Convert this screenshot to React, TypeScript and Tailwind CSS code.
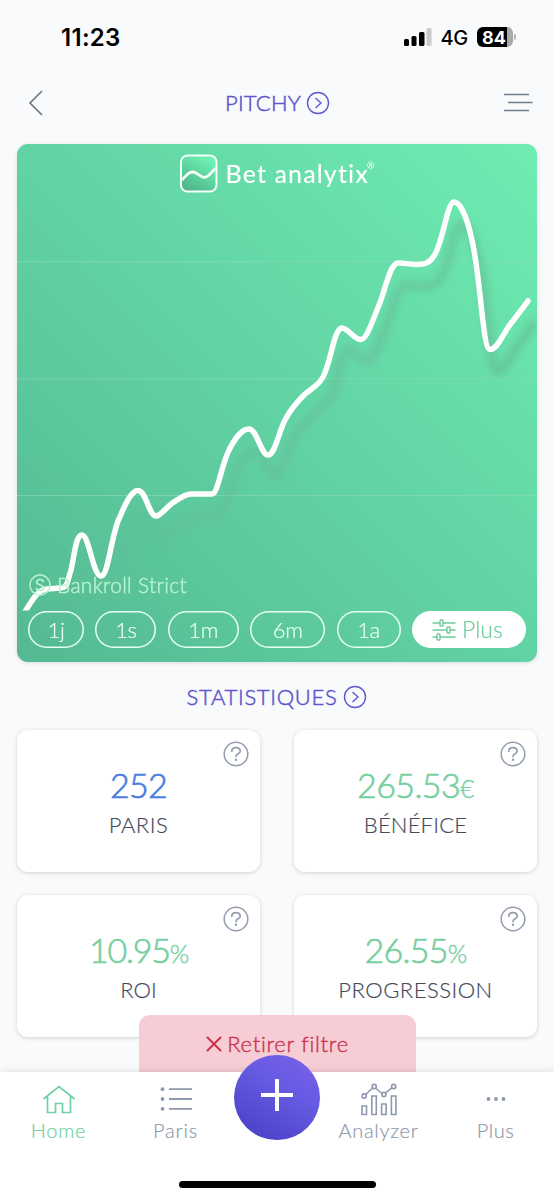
const ranges = [
  { label: "1j", size: "w-[56px]" },
  { label: "1s", size: "w-[61px]" },
  { label: "1m", size: "w-[71px]" },
  { label: "6m", size: "w-[75px]" },
  { label: "1a", size: "w-[64px]" }
]

const stats = [
  { id: 1, value: "252", unit: "", label: "PARIS", color: "text-[#4a7ee0]", tracking: "tracking-[-0.7px]", labelTracking: "tracking-[0.5px]" },
  { id: 2, value: "265.53", unit: "€", label: "BÉNÉFICE", color: "text-[#79cf9f]", tracking: "tracking-[-0.6px]", labelTracking: "tracking-[0.2px]" },
  { id: 3, value: "10.95", unit: "%", label: "ROI", color: "text-[#79cf9f]", tracking: "tracking-[-1.2px]", labelTracking: "tracking-[0.1px]" },
  { id: 4, value: "26.55", unit: "%", label: "PROGRESSION", color: "text-[#79cf9f]", tracking: "tracking-[-0.7px]", labelTracking: "tracking-[0.5px]" }
]

const curve =
  "M24 613 C32 601 38 589 47 589 L60 588 C68 588 67 582 71 570 C75 552 76 535 82 535 C89 535 93 576 101 576 C108 576 110 543 118 521 C123 510 130 490.500 138 490.500 C146 490.500 149 516 156 516 C161 516 168 505 174 502 C180 498 185 494 191 494 L212 494 C218 494 221 465 230 448 C235 439 241 429 249 429 C257 429 261 455 268 455 C275 455 279 431 285 420 C291 408 298 401 305 394 C312 388 318 386 323 377 C331 362 334 328 342 328 C348 328 354 339.500 361 339.500 C367 339.500 373 319 379 305 C385 291 390 263 398 263 C406 263 411 264.500 416 264.500 C423 264.500 429 264 434 256 C443 243 447 202 454 202 C461 202 468 220 473 245 C481 285 483 349.500 490 349.500 C497 349.500 501 338 509 326 L528 301"

const StatusBar = () => (
  <div className="flex h-[74px] items-center justify-between pl-[61px] pr-[38px] font-[Inter,sans-serif] text-black">
    <span className="mt-[2px] text-[24px] font-semibold tracking-[0.3px]">11:23</span>
    <div className="flex items-center">
      <svg width="28" height="18" viewBox="0 0 28 18">
        <rect x="0" y="11" width="5" height="7" rx="1.500" />
        <rect x="7.500" y="8" width="5" height="10" rx="1.500" />
        <rect x="15" y="4" width="5.500" height="14" rx="1.500" />
        <rect x="22.500" y="0" width="5" height="18" rx="1.500" fill="#c9cacc" />
      </svg>
      <span className="ml-[9px] mt-[2px] text-[20px] font-medium tracking-[-0.3px]">4G</span>
      <div className="ml-[9px] flex h-[20px] w-[36px] items-center justify-center rounded-[6px] bg-[linear-gradient(90deg,#000_84%,#a8a9ab_84%)] pr-[2px] text-[18px] font-bold text-white">
        84
      </div>
      <div className="ml-[1px] h-[6px] w-[2px] rounded-r-full bg-[#b3b4b6]" />
    </div>
  </div>
)

const CircleArrow = () => (
  <svg width="24" height="24" viewBox="0 0 24 24" fill="none" stroke="#6258d0" strokeWidth="1.400">
    <circle cx="12" cy="12" r="10.500" />
    <path d="M9.500 7 L15 12 L9.500 17" />
  </svg>
)

const HelpIcon = () => (
  <svg width="26" height="26" viewBox="0 0 26 26" fill="none" stroke="#949db0" strokeWidth="1.500" strokeLinecap="round">
    <circle cx="13" cy="13" r="11.800" />
    <path d="M8.800 10.200 C8.800 5.300 17.200 5.300 17.200 10.200 C17.200 13 13 12.600 13 15.500" strokeWidth="1.700" />
    <circle cx="13" cy="18.700" r="1.200" fill="#949db0" stroke="none" />
  </svg>
)

const Logo = () => (
  <div className="flex items-start justify-center pt-[10px] text-white">
    <svg width="38" height="39" viewBox="0 0 38 39" fill="none" stroke="#f4fff9">
      <defs>
        <linearGradient id="logo" x1="0" y1="1" x2="0.600" y2="0">
          <stop offset="0" stopColor="#49ad83" />
          <stop offset="1" stopColor="#6df0b3" />
        </linearGradient>
      </defs>
      <rect x="1" y="1.500" width="35.500" height="36" rx="6.500" strokeWidth="2" fill="url(#logo)" />
      <path d="M2 26 C7 20 11 16 16 19 C21 22 24 26 29 21 L36 14" strokeWidth="2.800" />
    </svg>
    <span className="ml-[8px] mt-[2px] text-[25px] font-medium leading-[34px] tracking-[1.1px]">Bet analytix</span>
    <span className="-ml-[2px] mt-[5px] text-[9px] leading-[14px]">®</span>
  </div>
)

const Chart = () => (
  <section className="relative mx-[17px] flex h-[518px] flex-col justify-between overflow-hidden rounded-[11px] bg-[linear-gradient(45deg,#55b992_0%,#61d2a3_48%,#6eedb2_100%)]">
    <svg className="absolute inset-0" width="520" height="518" viewBox="17 144 520 518" fill="none">
      <defs>
        <filter id="soft" x="-10%" y="-10%" width="120%" height="130%">
          <feGaussianBlur stdDeviation="4.500" />
        </filter>
        <linearGradient id="shade" x1="17" y1="0" x2="537" y2="0" gradientUnits="userSpaceOnUse">
          <stop offset="0" stopColor="#6cad94" stopOpacity="0" />
          <stop offset="0.450" stopColor="#6cad94" stopOpacity="0.450" />
          <stop offset="1" stopColor="#63a785" stopOpacity="0.650" />
        </linearGradient>
        <clipPath id="plot">
          <rect x="17" y="144" width="520" height="466.500" />
        </clipPath>
      </defs>
      <path d="M17 261.500 H537 M17 378.900 H537 M17 495.500 H537" stroke="#8fd9b9" strokeOpacity="0.600" />
      <g clipPath="url(#plot)" strokeLinecap="round" strokeLinejoin="round">
        <path d={curve} transform="translate(7 22)" stroke="url(#shade)" strokeWidth="6.500" filter="url(#soft)" />
        <path d={curve} stroke="#fff" strokeWidth="5.500" />
      </g>
    </svg>
    <div className="relative">
      <Logo />
    </div>
    <div className="relative pb-[14px]">
      <div className="flex items-center gap-[6px] pl-[12px] text-[#b9f4ce]">
        <svg width="22" height="22" viewBox="0 0 22 22" fill="none" stroke="currentColor" strokeWidth="1.400">
          <circle cx="11" cy="11" r="10" />
          <path d="M14.500 8 C14 4.500 7.500 4.800 7.700 8.200 C8 11.800 14.600 10.200 14.500 14 C14.300 17.300 7.600 17.400 7.300 13.800" strokeWidth="1.700" />
        </svg>
        <span className="text-[21px] font-light leading-[24px] tracking-[0.3px] [-webkit-text-stroke:0.4px_currentColor]">Bankroll Strict</span>
      </div>
      <div className="mt-[14px] flex justify-between pl-[11px] pr-[11px]">
        {ranges.map((range) => (
          <button
            key={range.label}
            className={`${range.size} h-[37px] rounded-full text-[22px] font-light leading-[37px] tracking-[-0.3px] text-[#eafff4] shadow-[inset_0_0_0_1.5px_#e8fff3] [-webkit-text-stroke:0.2px_currentColor]`}
          >
            {range.label}
          </button>
        ))}
        <button className="flex h-[37px] w-[114px] items-center justify-center gap-[6px] rounded-full bg-white pr-[3px] text-[23px] font-light text-[#6fcb9b] [-webkit-text-stroke:0.2px_currentColor]">
          <svg width="24" height="22" viewBox="0 0 24 22" fill="none" stroke="currentColor" strokeWidth="1.400">
            <path d="M0.500 4 H8 M11 4 H23.500 M0.500 11 H15 M18 11 H23.500 M0.500 18 H5 M8 18 H23.500" />
            <rect x="8" y="1" width="3" height="6" rx="0.800" />
            <rect x="15" y="8" width="3" height="6" rx="0.800" />
            <rect x="5" y="15" width="3" height="6" rx="0.800" />
          </svg>
          Plus
        </button>
      </div>
    </div>
  </section>
)

const BottomNav = () => (
  <nav className="absolute inset-x-0 bottom-0 h-[128px] bg-white shadow-[0_0_8px_rgba(0,0,0,0.12)]">
    <div className="grid grid-cols-[117px_117px_86px_117px_117px] pt-[10px] text-center text-[20px] font-light leading-[24px] text-[#8f99ad] [-webkit-text-stroke:0.2px_currentColor]">
      <div className="flex flex-col items-center text-[#6fd0a3]">
        <svg width="34" height="34" viewBox="0 0 34 34" fill="none" stroke="currentColor" strokeWidth="1.700">
          <path d="M1.500 17 L17 4.500 L32.500 17 M5.500 14 V30.500 H13.500 V21.500 H20.500 V30.500 H28.500 V14" />
        </svg>
        <span className="mt-[2px] tracking-[0.8px]">Home</span>
      </div>
      <div className="flex flex-col items-center">
        <svg width="34" height="34" viewBox="0 0 34 34" fill="none" stroke="currentColor" strokeWidth="1.800">
          <path d="M10 7.200 H33 M10 17 H33 M10 26.800 H33" />
          <g fill="currentColor" stroke="none">
            <circle cx="3.500" cy="7.200" r="1.900" />
            <circle cx="3.500" cy="17" r="1.900" />
            <circle cx="3.500" cy="26.800" r="1.900" />
          </g>
        </svg>
        <span className="mt-[2px] tracking-[0.8px]">Paris</span>
      </div>
      <div />
      <div className="flex flex-col items-center">
        <svg width="36" height="34" viewBox="0 0 36 34" fill="none" stroke="currentColor" strokeWidth="1.600">
          <path d="M1 24 H5.500 V32.500 H1 Z M10.800 14 H15.300 V32.500 H10.800 Z M20.600 22 H25.100 V32.500 H20.600 Z M30.400 14 H34.900 V32.500 H30.400 Z" />
          <path d="M4.700 12.500 L11.500 6 M15 6.500 L21 11.500 M24.700 11 L31 5.700" />
          <circle cx="3.200" cy="14" r="2.100" />
          <circle cx="13.200" cy="4.500" r="2.100" />
          <circle cx="22.900" cy="12.500" r="2.100" />
          <circle cx="32.700" cy="4.500" r="2.100" />
        </svg>
        <span className="mt-[2px] tracking-[0.7px]">Analyzer</span>
      </div>
      <div className="flex flex-col items-center">
        <svg width="34" height="34" viewBox="0 0 34 34" fill="currentColor">
          <circle cx="9.500" cy="17" r="1.900" />
          <circle cx="17" cy="17" r="1.900" />
          <circle cx="24.500" cy="17" r="1.900" />
        </svg>
        <span className="mt-[2px] tracking-[0.5px]">Plus</span>
      </div>
    </div>
    {/* Add button sits over the bar */}
    <button className="absolute left-[234px] top-[-17px] flex h-[85px] w-[86px] items-center justify-center rounded-full bg-[linear-gradient(30deg,#4a42c8_10%,#655be2_60%,#7b60e8_95%)]">
      <svg className="-mt-[5px]" width="34" height="34" viewBox="0 0 34 34" stroke="#fff" strokeWidth="4">
        <path d="M17 1 V33 M1 17 H33" />
      </svg>
    </button>
    <div className="absolute bottom-[12px] left-[179px] h-[7px] w-[197px] rounded-full bg-black" />
  </nav>
)

const App = () => {
  return (
    <div className="relative h-[1200px] w-[554px] overflow-hidden bg-[#f8fafc] font-[Lato,sans-serif]">
      <StatusBar />

      {/* Header */}
      <header className="flex h-[70px] items-start justify-between pl-[28px] pr-[21px] pt-[16px]">
        <svg width="16" height="26" viewBox="0 0 16 26" fill="none" stroke="#727787" strokeWidth="1.700">
          <path d="M14 1 L2 13 L14 25" />
        </svg>
        <h1 className="ml-[8px] flex items-center gap-[5px] text-[22px] font-light leading-[26px] tracking-[0.2px] text-[#5f54cc] [-webkit-text-stroke:0.5px_currentColor]">
          PITCHY
          <CircleArrow />
        </h1>
        <svg width="30" height="26" viewBox="0 0 30 26" fill="none" stroke="#727c90" strokeWidth="1.600" strokeLinecap="round">
          <path d="M1.500 4.500 H25.500 M5.500 12.500 H29 M1.500 20.500 H25.500" />
        </svg>
      </header>

      <div className="rounded-[11px] drop-shadow-[0_1px_2px_rgba(0,0,0,0.12)]">
        <Chart />
      </div>

      {/* Statistics */}
      <h2 className="flex h-[68px] items-center justify-center gap-[6px] pt-[1px] text-[22px] font-light leading-[26px] tracking-[0.7px] text-[#5f54cc] [-webkit-text-stroke:0.5px_currentColor]">
        STATISTIQUES
        <CircleArrow />
      </h2>
      <section className="grid grid-cols-2 gap-x-[34px] gap-y-[23px] px-[17px]">
        {stats.map((stat) => (
          <div
            key={stat.id}
            className="relative flex h-[142px] flex-col items-center rounded-[11px] bg-white pt-[34px] shadow-[0_1px_4px_rgba(0,0,0,0.16)]"
          >
            <div className="absolute right-[11px] top-[11px]">
              <HelpIcon />
            </div>
            <p className={`${stat.color} ${stat.tracking} text-[34px] font-light leading-[42px] [-webkit-text-stroke:0.7px_currentColor]`}>
              {stat.value}
              <span className="text-[25px] [-webkit-text-stroke:0.4px_currentColor]">{stat.unit}</span>
            </p>
            <p className={`${stat.labelTracking} mt-[2px] text-[22px] font-light leading-[28px] text-[#454a5c] [-webkit-text-stroke:0.2px_currentColor]`}>
              {stat.label}
            </p>
          </div>
        ))}
      </section>

      {/* Filter reset */}
      <button className="absolute left-[139px] top-[1015px] flex h-[60px] w-[277px] items-start justify-center gap-[5px] rounded-t-[11px] bg-[#f6cdd4] pt-[14px] text-[22px] font-light leading-[30px] tracking-[0.7px] text-[#c9324c] [-webkit-text-stroke:0.4px_currentColor]">
        <svg className="mt-[7px]" width="16" height="16" viewBox="0 0 16 16" stroke="currentColor" strokeWidth="2" strokeLinecap="round">
          <path d="M1.500 1.500 L14.500 14.500 M14.500 1.500 L1.500 14.500" />
        </svg>
        Retirer filtre
      </button>

      <BottomNav />
    </div>
  )
}

export default App
